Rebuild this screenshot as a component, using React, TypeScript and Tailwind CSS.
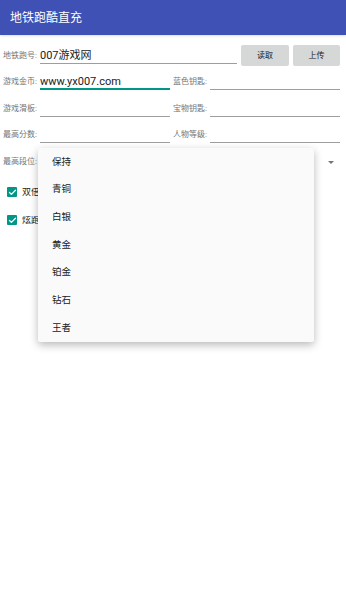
import { Check } from 'lucide-react';

const FONT = { fontFamily: 'Roboto, "Noto Sans CJK SC", sans-serif' };

const RANKS = ['保持', '青铜', '白银', '黄金', '铂金', '钻石', '王者'];

function Field({ label, value, focused, width }: { label: string; value?: string; focused?: boolean; width: string }) {
  return (
    <div className="flex items-center h-[16px]">
      <span className="w-[37px] text-[8px] text-[#757575] whitespace-nowrap leading-none">{label}</span>
      <div
        className={`${width} h-[16px] flex items-center text-[11px] text-[#212121] leading-none ${
          focused ? 'border-b-2 border-[#009688]' : 'border-b border-[#9e9e9e]'
        }`}
      >
        {value}
      </div>
    </div>
  );
}

// label is clipped where the popup covers it
function CheckRow({ label, className }: { label: string; className: string }) {
  return (
    <div className={`flex items-center h-[10px] pl-[4px] ${className}`}>
      <div className="w-[10px] h-[10px] rounded-[1px] bg-[#009688] flex items-center justify-center">
        <Check size={9} strokeWidth={3.5} className="text-white" />
      </div>
      <span className="ml-[5px] w-[16px] overflow-hidden whitespace-nowrap text-[9px] text-[#212121] leading-none">
        {label}
      </span>
    </div>
  );
}

export default function App() {
  return (
    <div className="relative w-full h-[600px] bg-white" style={FONT}>
      {/* Toolbar */}
      <div className="h-[35px] bg-[#3F51B5] flex items-center px-[10px] shadow-sm">
        <h1 className="text-[12px] text-white">地铁跑酷直充</h1>
      </div>

      <div className="px-[3px]">
        {/* Account row */}
        <div className="flex items-center h-[21px] mt-[10px]">
          <span className="w-[37px] text-[8px] text-[#757575] leading-none">地铁跑号:</span>
          <div className="w-[197px] h-[16px] flex items-center border-b border-[#9e9e9e] text-[11px] text-[#212121] leading-none">
            007游戏网
          </div>
          <button className="ml-[4px] w-[48px] h-[21px] rounded-[2px] bg-[#d6d7d7] text-[8px] text-[#212121]">读取</button>
          <button className="ml-[4px] w-[47px] h-[21px] rounded-[2px] bg-[#d6d7d7] text-[8px] text-[#212121]">上传</button>
        </div>

        <div className="flex mt-[8px] gap-[3px]">
          <Field label="游戏金币:" value="www.yx007.com" focused width="w-[130px]" />
          <Field label="蓝色钥匙:" width="w-[130px]" />
        </div>
        <div className="flex mt-[11px] gap-[3px]">
          <Field label="游戏滑板:" width="w-[130px]" />
          <Field label="宝物钥匙:" width="w-[130px]" />
        </div>
        <div className="flex mt-[10px] gap-[3px]">
          <Field label="最高分数:" width="w-[130px]" />
          <Field label="人物等级:" width="w-[130px]" />
        </div>

        {/* Spinner (value hidden under the open popup) */}
        <div className="flex items-center h-[16px] mt-[11px] w-[340px]">
          <span className="w-[37px] text-[8px] text-[#757575] leading-none">最高段位:</span>
          <span className="flex-1" />
          <svg width="6" height="3" viewBox="0 0 6 3" className="mr-[9px]">
            <path d="M0 0h6L3 3z" fill="#757575" />
          </svg>
        </div>

        <CheckRow label="双倍金币" className="mt-[17px]" />
        <CheckRow label="炫跑无限" className="mt-[18px]" />
      </div>

      {/* Dropdown popup */}
      <div className="absolute left-[38px] top-[148px] w-[276px] h-[194px] bg-[#fafafa] rounded-[2px] shadow-[0_3px_8px_rgba(0,0,0,0.28)]">
        {RANKS.map((r) => (
          <div key={r} className="h-[27.7px] flex items-center px-[14px] text-[9.5px] text-[#212121]">
            {r}
          </div>
        ))}
      </div>
    </div>
  );
}
